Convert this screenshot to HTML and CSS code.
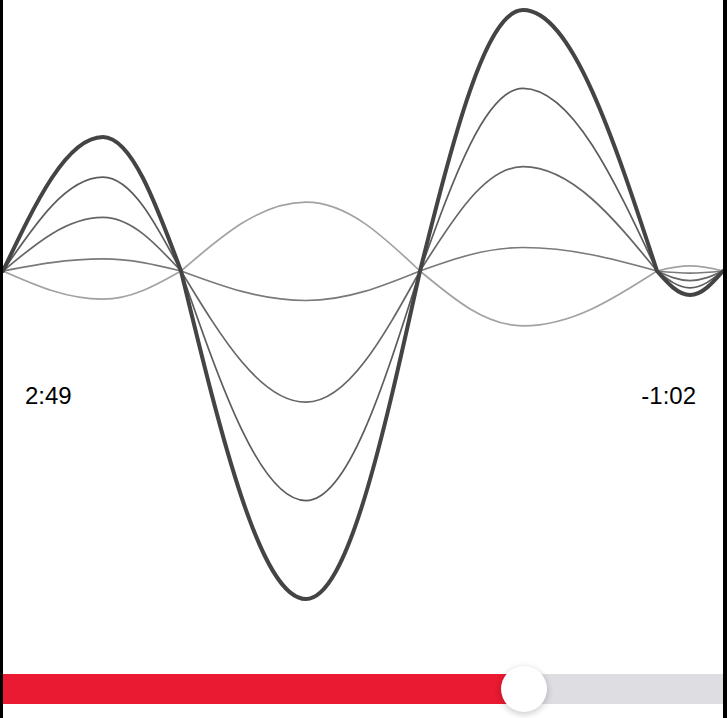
FILE: index.html
```html
<!DOCTYPE html>
<html lang="en">
<head>
    <meta charset="UTF-8">
    <meta name="viewport" content="width=device-width, initial-scale=1.0">
    <title>Now Playing</title>
    <link rel="stylesheet" href="styles.css">
</head>
<body>
    <main class="player">
        <section class="stage">
            <svg class="wave" viewBox="3 0 720 620" width="720" height="620">
                <defs>
                    <!-- one wave, baseline at 0; each line is this shape scaled -->
                    <path id="shape" vector-effect="non-scaling-stroke" fill="none"
                        d="M3 0 C35.6 -68.6 66.8 -134 103 -134 C131.2 -134 155.6 -68.6 181 0
                           C221.8 168 260.8 328 306 328 C347.3 328 382.8 168 420 0
                           C453.6 -133.7 485.7 -261 523 -261 C571.5 -261 613.3 -133.7 657 0
                           C667.8 12.3 678.1 24 690 24 C701.9 24 712.2 12.3 723 0"/>
                </defs>
                <use href="#shape" class="line faint" transform="translate(0 271) scale(1 -0.21)"/>
                <use href="#shape" class="line low" transform="translate(0 271) scale(1 0.09)"/>
                <use href="#shape" class="line mid" transform="translate(0 271) scale(1 0.4)"/>
                <use href="#shape" class="line high" transform="translate(0 271) scale(1 0.7)"/>
                <use href="#shape" class="line main" transform="translate(0 271)"/>
            </svg>
            <div class="times">
                <span class="elapsed">2:49</span>
                <span class="remaining">-1:02</span>
            </div>
        </section>
        <div class="seek">
            <div class="played" style="width: 72.4%;"></div>
            <div class="knob" style="left: 72.4%;"></div>
        </div>
    </main>
</body>
</html>
```

FILE: styles.css
```css
* {
    box-sizing: border-box;
}

body {
    margin: 0;
    background-color: black;
}

.player {
    display: grid;
    grid-template-rows: 1fr 30px;
    height: 100vh;
    margin: 0 4px 0 3px;
    padding-bottom: 14px;
    background-color: white;
    font-family: "Liberation Sans", Arial, sans-serif;
    overflow: hidden;
}

.stage {
    position: relative;
}

.wave {
    display: block;
}

.line {
    fill: none;
    stroke-linecap: round;
    stroke-linejoin: round;
}

.line.main {
    stroke: #444444;
    stroke-width: 4px;
}

.line.high {
    stroke: #5c5c5c;
    stroke-width: 1.7px;
}

.line.mid {
    stroke: #666666;
    stroke-width: 1.7px;
}

.line.low {
    stroke: #7a7a7a;
    stroke-width: 1.7px;
}

.line.faint {
    stroke: #a2a2a2;
    stroke-width: 1.7px;
}

.times {
    position: absolute;
    top: 384px;
    left: 0;
    right: 0;
    display: flex;
    justify-content: space-between;
    padding: 0 27px 0 22px;
    font-size: 24px;
    line-height: 24px;
    color: black;
}

.seek {
    position: relative;
    background-color: #dedde2;
}

.played {
    height: 100%;
    background-color: #e91a31;
}

.knob {
    position: absolute;
    top: 50%;
    width: 46px;
    height: 46px;
    border-radius: 50%;
    background-color: white;
    box-shadow: 0 2px 7px rgba(0, 0, 0, 0.22);
    transform: translate(-50%, -50%);
}
```
